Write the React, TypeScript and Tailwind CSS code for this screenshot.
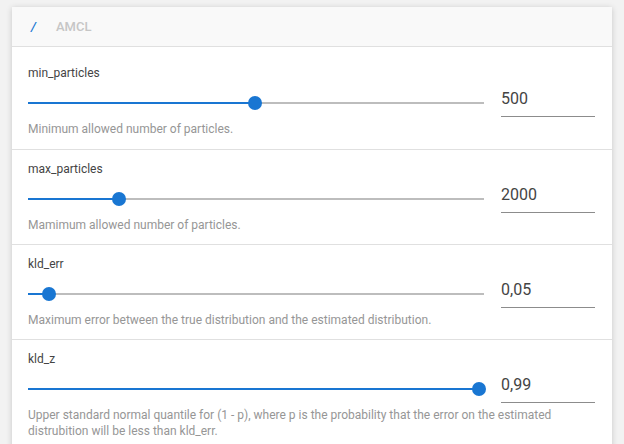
import React from "react";

type Param = {
  name: string;
  value: string;
  pct: number;
  desc: string;
};

const params: Param[] = [
  { name: "min_particles", value: "500", pct: 49.8, desc: "Minimum allowed number of particles." },
  { name: "max_particles", value: "2000", pct: 19.9, desc: "Mamimum allowed number of particles." },
  {
    name: "kld_err",
    value: "0,05",
    pct: 4.6,
    desc: "Maximum error between the true distribution and the estimated distribution.",
  },
  {
    name: "kld_z",
    value: "0,99",
    pct: 99,
    desc: "Upper standard normal quantile for (1 - p), where p is the probability that the error on the estimated distrubition will be less than kld_err.",
  },
];

const Slider = ({ pct }: { pct: number }) => {
  return (
    <div className="relative mt-3 h-[14px] flex-1">
      <div className="absolute left-0 right-0 top-[6px] h-[2px] bg-[#bdbdbd]" />
      <div className="absolute left-0 top-[6px] h-[2px] bg-[#1976d2]" style={{ width: `${pct}%` }} />
      <div
        className="absolute top-0 h-[14px] w-[14px] -translate-x-1/2 rounded-full bg-[#1976d2]"
        style={{ left: `${pct}%` }}
      />
    </div>
  );
};

const ParamRow = ({ p, first }: { p: Param; first: boolean }) => {
  return (
    <div
      className={`border-t border-[#e0e0e0] pl-4 pr-[17px] ${first ? "pt-[18px] pb-3" : "pt-[11px] pb-[11px]"}`}
    >
      <div className="text-[12px] leading-4 text-[#444]">{p.name}</div>
      <div className="mt-[3px] flex items-start">
        <Slider pct={p.pct} />
        <div className="ml-[17px] w-[94px]">
          <div className="h-[33px] border-b border-[#8c8c8c] pt-[5px] text-[16px] leading-5 text-[#444]">
            {p.value}
          </div>
        </div>
      </div>
      <div className="mt-1 text-[12px] leading-4 text-[#969696]">{p.desc}</div>
    </div>
  );
};

export default function App() {
  return (
    <div
      className="h-[444px] overflow-hidden bg-[#f2f2f2] px-3 pt-[7px]"
      style={{ fontFamily: "Roboto, 'Liberation Sans', sans-serif" }}
    >
      <div className="bg-white shadow-[0_1px_6px_rgba(0,0,0,0.18)]">
        <div className="flex h-[39px] items-center bg-[#f9f9f9] pl-[19px] text-[13px] font-medium">
          <span className="italic text-[#1976d2]">/</span>
          <span className="ml-[20px] text-[#c6c6c6]">AMCL</span>
        </div>
        {params.map((p, i) => (
          <ParamRow key={p.name} p={p} first={i === 0} />
        ))}
      </div>
    </div>
  );
}
